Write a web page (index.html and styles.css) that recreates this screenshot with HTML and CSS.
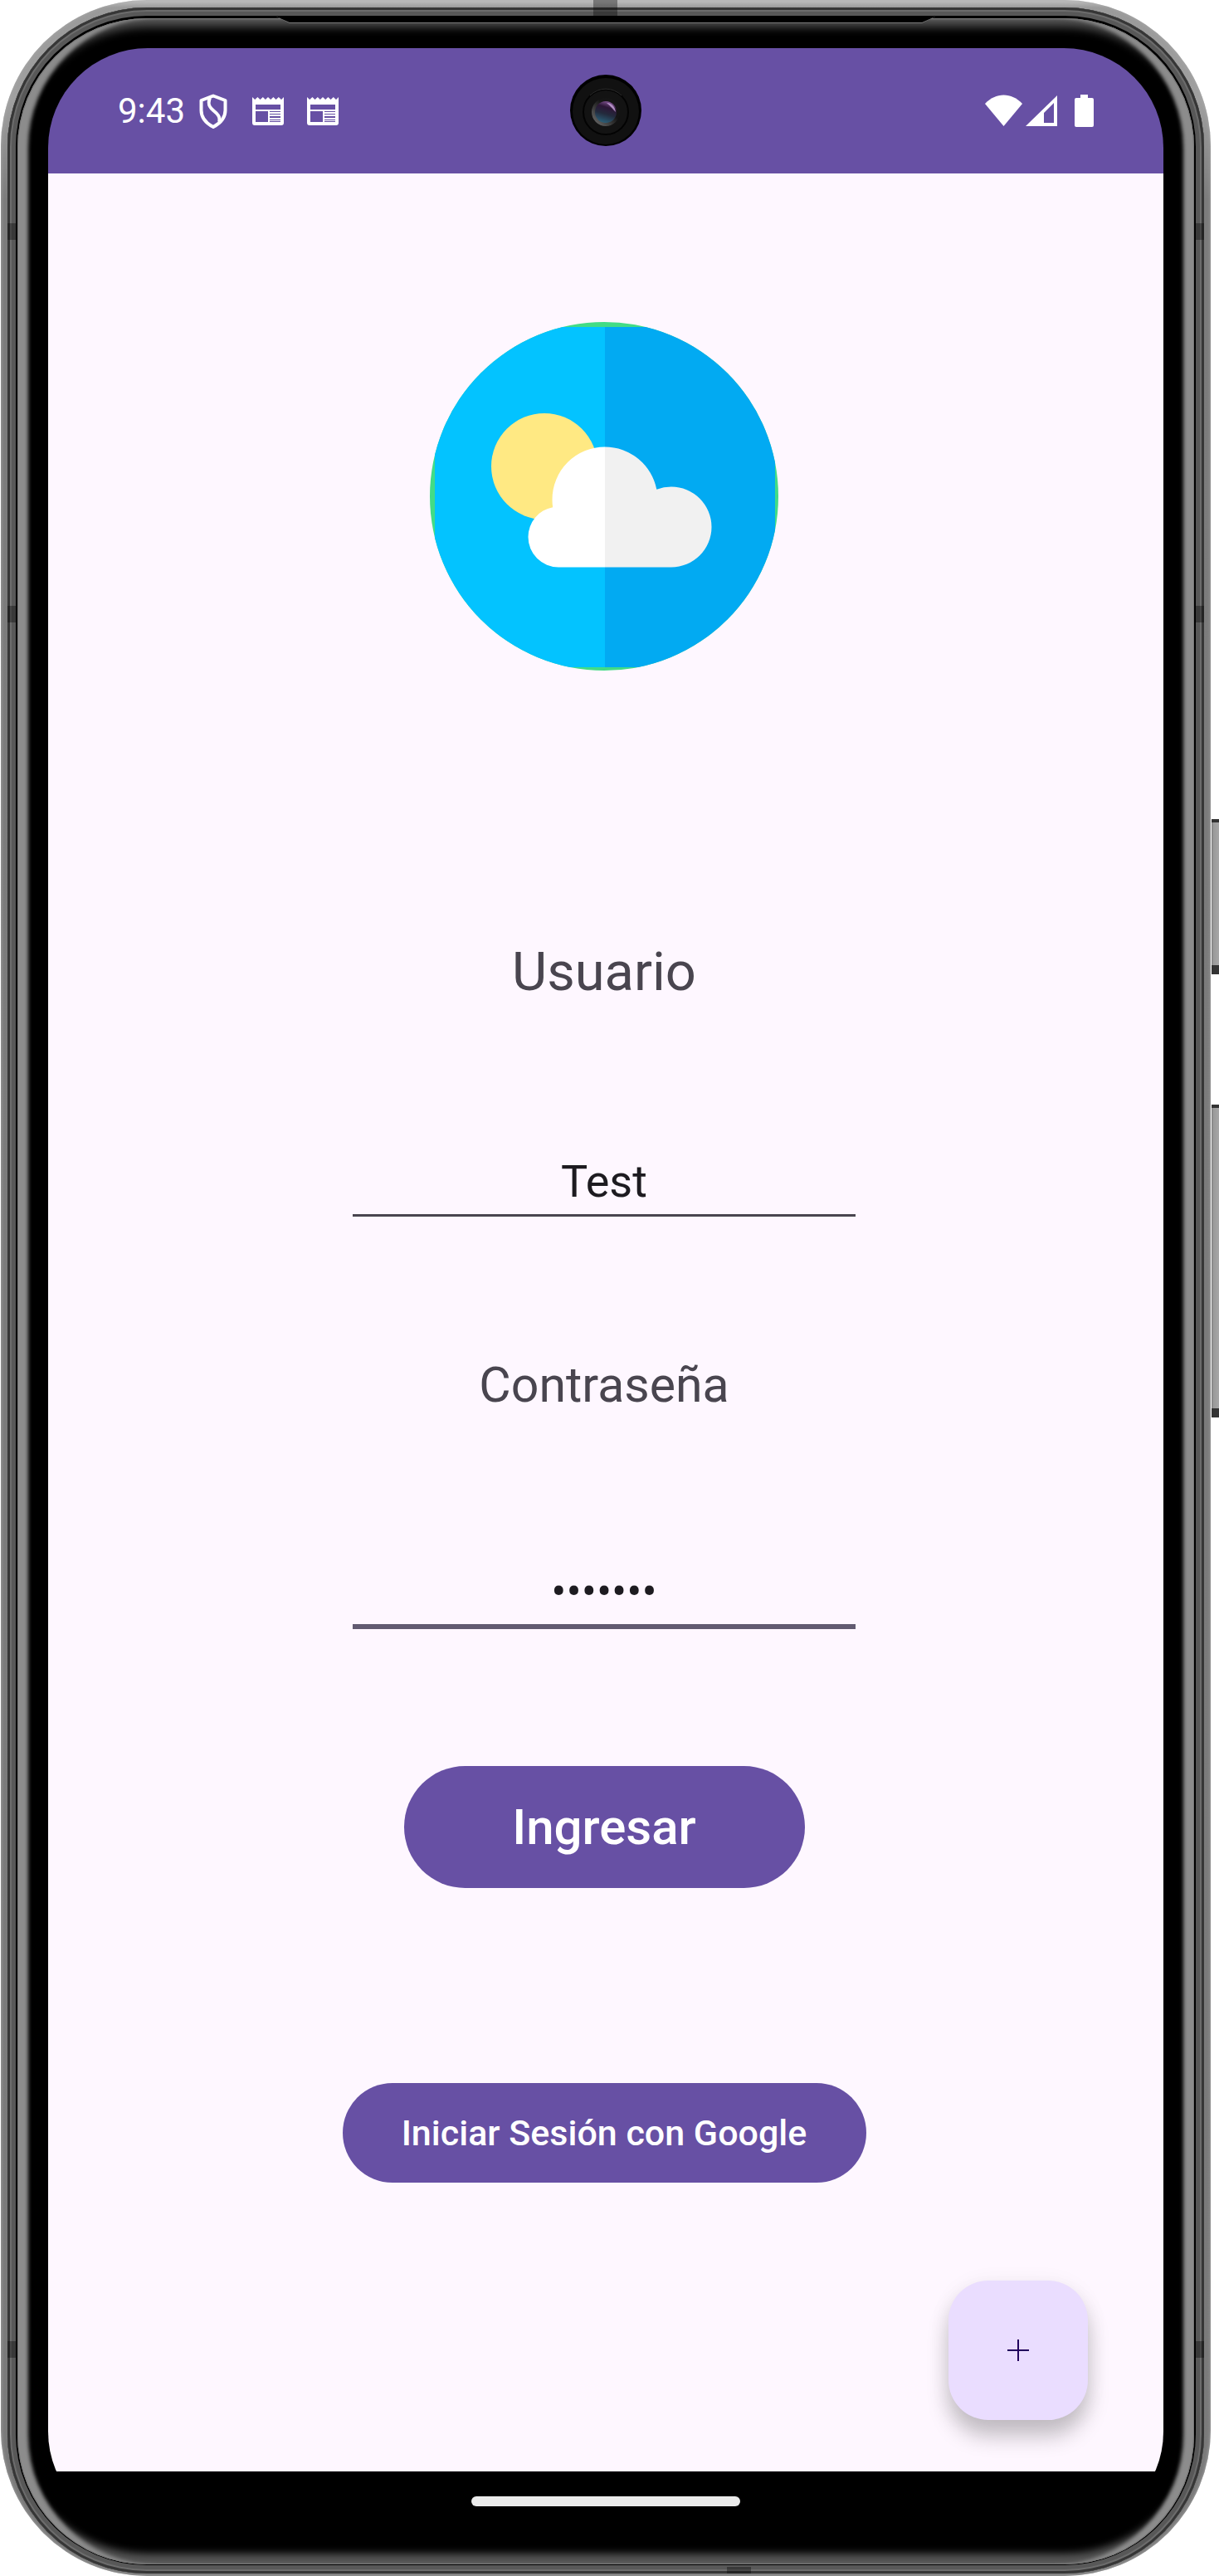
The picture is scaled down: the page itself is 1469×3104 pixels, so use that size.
FILE: index.html
```html
<!DOCTYPE html>
<html lang="es">
<head>
<meta charset="utf-8">
<meta name="viewport" content="width=device-width, initial-scale=1">
<title>Iniciar sesión</title>
<link rel="stylesheet" href="styles.css">
</head>
<body>
<div class="device">
  <span class="side-key side-key-power"></span>
  <span class="side-key side-key-volume"></span>
  <div class="frame">
    <div class="rim">
      <div class="bezel">
        <span class="earpiece"><span class="earpiece-slot"></span></span>
        <div class="screen">
          <header class="status-bar">
            <div class="status-group">
              <span class="clock">9:43</span>
              <svg class="icon-shield" viewBox="0 0 34 42" aria-hidden="true">
                <path d="M17 2.500 31.500 8v12c0 9-6 15.500-14.500 20C8.500 35.500 2.500 29 2.500 20V8z" fill="none" stroke="#fff" stroke-width="4" stroke-linejoin="round"/>
                <path d="M13 5c-3 7-1 11 4 15s9 8 7 14" fill="none" stroke="#fff" stroke-width="4"/>
              </svg>
              <svg class="icon-news" viewBox="0 0 38 34" aria-hidden="true">
                <path fill="#fff" fill-rule="evenodd" d="M0 0l3.200 3 3.200-3 3.200 3 3.200-3 3.100 3 3.100-3 3.200 3 3.200-3 3.200 3 3.200-3 3.200 3 3-3v31q0 3-3 3H3q-3 0-3-3zM4 9v6h30V9zM4 17v13h15V17zM21 17v1h13v-1zM21 20v1h13v-1zM21 23v2h13v-2zM21 27v1h13v-1zM21 29v1h13v-1z"/>
              </svg>
              <svg class="icon-news" viewBox="0 0 38 34" aria-hidden="true">
                <path fill="#fff" fill-rule="evenodd" d="M0 0l3.200 3 3.200-3 3.200 3 3.200-3 3.100 3 3.100-3 3.200 3 3.200-3 3.200 3 3.200-3 3.200 3 3-3v31q0 3-3 3H3q-3 0-3-3zM4 9v6h30V9zM4 17v13h15V17zM21 17v1h13v-1zM21 20v1h13v-1zM21 23v2h13v-2zM21 27v1h13v-1zM21 29v1h13v-1z"/>
              </svg>
            </div>
            <div class="status-group">
              <svg class="icon-signals" viewBox="0 0 132 40" aria-hidden="true">
                <g fill="#fff">
                  <path d="M0 11C13-3 32-3 45 11L22.500 38z"/>
                  <path fill-rule="evenodd" d="M87 1v37H49zM83 10 71 22v12h12z"/>
                  <path d="M115 0h9v4h5q2 0 2 2v31q0 2-2 2h-19q-2 0-2-2V6q0-2 2-2h5z"/>
                </g>
              </svg>
            </div>
            <svg class="camera" viewBox="0 0 86 86" aria-hidden="true">
              <defs>
                <linearGradient id="lens" x1="0.700" y1="0" x2="0.400" y2="1">
                  <stop offset="0" stop-color="#8a5a9c"/>
                  <stop offset="0.300" stop-color="#2c1636"/>
                  <stop offset="0.600" stop-color="#232a3c"/>
                  <stop offset="1" stop-color="#2b5f78"/>
                </linearGradient>
                <linearGradient id="lensRing" x1="1" y1="0" x2="0" y2="1">
                  <stop offset="0.400" stop-color="#151515"/>
                  <stop offset="1" stop-color="#777"/>
                </linearGradient>
              </defs>
              <circle cx="43" cy="43" r="43" fill="#000"/>
              <circle cx="43" cy="44" r="40" fill="#111"/>
              <circle cx="43" cy="45" r="27" fill="#131313" stroke="#030303" stroke-width="2"/>
              <path d="M24 25a27 27 0 0 1 38 0" fill="none" stroke="#2c2c2c" stroke-width="1"/>
              <circle cx="43" cy="45" r="17" fill="url(#lensRing)"/>
              <circle cx="43" cy="45" r="13" fill="url(#lens)"/>
              <path d="M44 34c6 0 10 4 11 11-4-4-6-7-11-11z" fill="#c9a6dc" opacity="0.800"/>
            </svg>
          </header>
          <main class="content">
            <svg class="logo" viewBox="0 0 420 420" role="img" aria-label="Clima">
              <defs>
                <clipPath id="disc"><circle cx="210" cy="210" r="210"/></clipPath>
                <clipPath id="cloud">
                  <circle cx="211" cy="214" r="63.500"/>
                  <circle cx="291" cy="247" r="48.500"/>
                  <circle cx="155" cy="259" r="36.500"/>
                  <rect x="155" y="230" width="136" height="65.500"/>
                </clipPath>
              </defs>
              <g clip-path="url(#disc)">
                <rect width="420" height="420" fill="#42dc86"/>
                <rect x="6" y="6" width="205" height="410" fill="#03c3ff"/>
                <rect x="211" y="6" width="205" height="410" fill="#02aaf2"/>
              </g>
              <circle cx="138" cy="174" r="64" fill="#ffe983"/>
              <g clip-path="url(#cloud)">
                <rect x="100" y="140" width="111" height="170" fill="#fff"/>
                <rect x="211" y="140" width="140" height="170" fill="#f1f1f1"/>
              </g>
            </svg>
            <form class="login">
              <label class="label label-user" for="user">Usuario</label>
              <input class="input input-user" id="user" type="text" value="Test">
              <label class="label label-password" for="password">Contraseña</label>
              <input class="input input-password" id="password" type="password" value="1234567">
              <button class="button button-login" type="button">Ingresar</button>
              <button class="button button-google" type="button">Iniciar Sesión con Google</button>
            </form>
            <button class="fab" type="button" aria-label="Agregar">
              <svg class="icon-plus" viewBox="0 0 26 26" aria-hidden="true"><path d="M13 0v26M0 13h26" stroke="#21005d" stroke-width="2"/></svg>
            </button>
          </main>
          <nav class="nav-bar"><span class="nav-handle"></span></nav>
        </div>
      </div>
    </div>
    <span class="seam seam-side seam-left seam-upper"></span>
    <span class="seam seam-side seam-left seam-middle"></span>
    <span class="seam seam-side seam-left seam-lower"></span>
    <span class="seam seam-side seam-right seam-upper"></span>
    <span class="seam seam-side seam-right seam-middle"></span>
    <span class="seam seam-side seam-right seam-lower"></span>
    <span class="seam seam-top"></span>
    <span class="seam seam-bottom"></span>
  </div>
</div>
</body>
</html>
```
FILE: styles.css
```css
* {
  box-sizing: border-box;
}

body {
  margin: 0;
  background: #fff;
  font-family: Roboto, "Liberation Sans", sans-serif;
}

/* Phone hardware */
.device {
  position: relative;
  display: flex;
  min-height: 100vh;
  padding: 0 10px 0 1px;
  overflow: hidden;
}

.frame {
  position: relative;
  flex: 1;
  display: flex;
  min-width: 0;
  padding: 9px 8px 3px;
  border-radius: 176px;
  background: linear-gradient(#c4c4c4, #9a9a9a 9px, #a0a0a0 120px, #7c7c7c 240px, #7a7a7a);
  box-shadow: inset 0 0 4px #aaa;
}

.rim {
  flex: 1;
  display: flex;
  min-width: 0;
  padding: 13px 12px 11px;
  border-radius: 168px;
  background: #000;
  box-shadow:
    inset 0 0 0 3px #363636,
    inset 0 0 0 5px #6c6c6c,
    inset 0 0 0 10px #585858;
}

.bezel {
  position: relative;
  flex: 1;
  display: flex;
  min-width: 0;
  padding: 36px 37px 40px;
  border-radius: 156px;
  background: #000;
  box-shadow:
    inset 0 0 0 1px #777,
    inset 14px 0 4px -1px #8c8c8c,
    inset -14px 0 4px -1px #8c8c8c,
    inset 0 13px 12px -3px #555,
    inset 0 -16px 10px -3px #555;
}

.earpiece,
.earpiece-slot {
  position: absolute;
  top: -2px;
  left: 22%;
  right: 22%;
  height: 8px;
  background: #777;
  clip-path: polygon(0 0, 100% 0, calc(100% - 16px) 100%, 16px 100%);
}

.earpiece-slot {
  top: 0;
  left: 0;
  right: 0;
  height: 7px;
  background: #000;
}

.side-key {
  position: absolute;
  right: 0;
  width: 9px;
  border: solid #333;
  border-width: 4px 0 11px;
  background: linear-gradient(90deg, #777, #999 2px, #a6a6a6);
}

.side-key-power {
  top: 987px;
  height: 187px;
}

.side-key-volume {
  top: 1331px;
  height: 377px;
}

.seam {
  position: absolute;
  background: rgba(0, 0, 0, 0.35);
}

.seam-side {
  width: 10px;
  height: 20px;
}

.seam-left { left: 8px; }
.seam-right { right: 8px; }
.seam-upper { top: 269px; }
.seam-middle { top: 730px; }
.seam-lower { bottom: 263px; }

.seam-top {
  top: 0;
  left: 49%;
  width: 29px;
  height: 20px;
}

.seam-bottom {
  bottom: 3px;
  left: 60%;
  width: 29px;
  height: 8px;
}

/* Screen */
.screen {
  flex: 1;
  display: flex;
  flex-direction: column;
  min-width: 0;
  border-radius: 120px;
  overflow: hidden;
  background: #000;
}

.status-bar {
  position: relative;
  display: flex;
  justify-content: space-between;
  align-items: center;
  height: 151px;
  padding: 0 83px 0 84px;
  background: #6750a4;
  color: #fff;
}

.status-group {
  display: flex;
  align-items: center;
}

.clock {
  margin-right: 17px;
  font-size: 42px;
  line-height: 50px;
}

.icon-shield {
  width: 34px;
  height: 42px;
  margin-right: 2px;
}

.icon-news {
  width: 38px;
  height: 34px;
  margin-left: 28px;
}

.icon-signals {
  width: 132px;
  height: 40px;
}

.camera {
  position: absolute;
  top: 32px;
  left: 50%;
  width: 86px;
  height: 86px;
  margin-left: -43px;
}

.content {
  position: relative;
  flex: 1;
  display: flex;
  flex-direction: column;
  align-items: center;
  padding: 179px 4px 62px 0;
  background: #fef7ff;
}

.logo {
  width: 420px;
  height: 420px;
  max-width: 80%;
}

.login {
  display: flex;
  flex-direction: column;
  align-items: center;
  width: 100%;
}

.label {
  color: #49454f;
}

.label-user {
  margin-top: 324px;
  font-size: 65px;
  line-height: 78px;
}

.label-password {
  margin-top: 168px;
  font-size: 59px;
  line-height: 70px;
}

.input {
  width: 606px;
  max-width: 90%;
  margin: 181px 0 0;
  padding: 0 0 8px;
  border: 0 solid #49454f;
  border-radius: 0;
  outline: 0;
  background: transparent;
  color: #1d1b20;
  font: 54px/64px Roboto, "Liberation Sans", sans-serif;
  text-align: center;
}

.input-user {
  height: 75px;
  border-bottom-width: 3px;
}

.input-password {
  height: 78px;
  border-bottom: 6px solid #625b71;
}

.button {
  max-width: 95%;
  padding: 0;
  border: 0;
  border-radius: 74px;
  background: #6750a4;
  color: #fff;
  font-family: inherit;
  font-weight: 500;
}

.button-login {
  width: 483px;
  height: 147px;
  margin-top: 165px;
  font-size: 60px;
}

.button-google {
  width: 631px;
  height: 120px;
  margin-top: 235px;
  font-size: 43px;
}

.fab {
  position: absolute;
  right: 91px;
  bottom: 62px;
  display: flex;
  align-items: center;
  justify-content: center;
  width: 168px;
  height: 168px;
  padding: 0;
  border: 0;
  border-radius: 48px;
  background: #eaddff;
  box-shadow: 0 20px 26px rgba(0, 0, 0, 0.22), 0 4px 28px rgba(0, 0, 0, 0.06);
}

.icon-plus {
  width: 26px;
  height: 26px;
}

.nav-bar {
  display: flex;
  justify-content: center;
  height: 72px;
  padding-top: 30px;
  background: #000;
}

.nav-handle {
  width: 324px;
  height: 12px;
  border-radius: 6px;
  background: #ebebeb;
}
```
